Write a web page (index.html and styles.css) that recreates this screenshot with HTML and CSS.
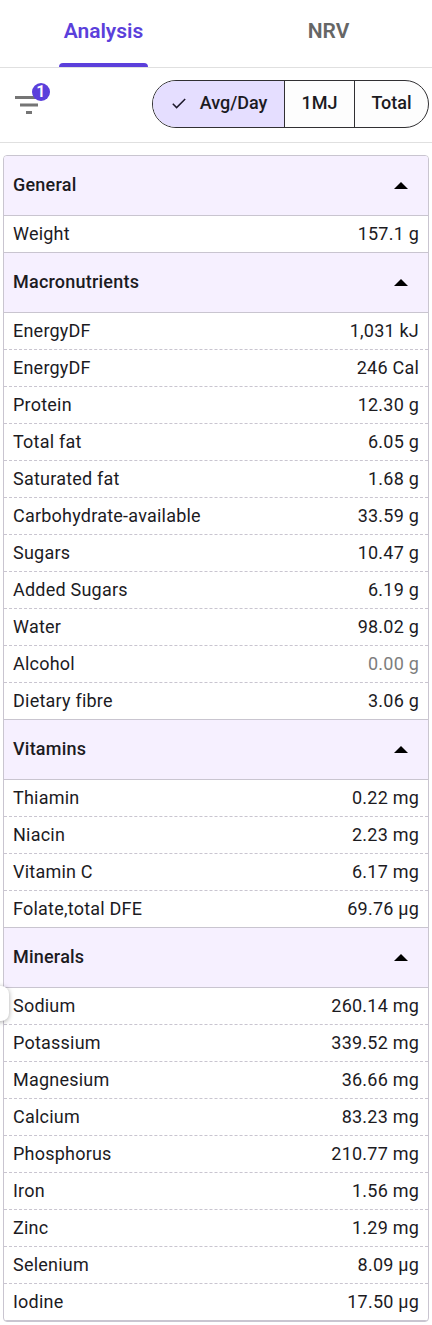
FILE: index.html
```
<!DOCTYPE html>
<html lang="en">

<head>
    <meta charset="UTF-8">
    <meta name="viewport" content="width=device-width, initial-scale=1.0">
    <title>Analysis</title>
    <link rel="stylesheet" href="styles.css">
</head>

<body>
    <div class="tabs">
        <div class="tab active"><span>Analysis</span></div>
        <div class="tab"><span>NRV</span></div>
    </div>

    <div class="toolbar">
        <div class="filter">
            <svg width="24" height="24" viewBox="0 0 24 24">
                <path fill="#757575" d="M0 3h24v3H0zM5 10.5h18v3H5zM11 18h6v3h-6z" />
            </svg>
            <span class="badge">1</span>
        </div>
        <div class="toggle">
            <div class="toggle-item selected">
                <svg width="18" height="18" viewBox="0 0 18 18">
                    <path fill="none" stroke="#1d192b" stroke-width="1.5" d="M2.8 10.8l3.8 3.8 8.6-8.6" />
                </svg>
                Avg/Day
            </div>
            <div class="toggle-item mj">1MJ</div>
            <div class="toggle-item total">Total</div>
        </div>
    </div>

    <div class="nutrients" id="nutrients"></div>
    <div class="drawer-handle"></div>

    <!-- Script -->
    <script>
        const groups = [
            { name: "General", rows: [["Weight", "157.1 g"]] },
            {
                name: "Macronutrients", rows: [
                    ["EnergyDF", "1,031 kJ"],
                    ["EnergyDF", "246 Cal"],
                    ["Protein", "12.30 g"],
                    ["Total fat", "6.05 g"],
                    ["Saturated fat", "1.68 g"],
                    ["Carbohydrate-available", "33.59 g"],
                    ["Sugars", "10.47 g"],
                    ["Added Sugars", "6.19 g"],
                    ["Water", "98.02 g"],
                    ["Alcohol", "0.00 g"],
                    ["Dietary fibre", "3.06 g"]
                ]
            },
            {
                name: "Vitamins", rows: [
                    ["Thiamin", "0.22 mg"],
                    ["Niacin", "2.23 mg"],
                    ["Vitamin C", "6.17 mg"],
                    ["Folate,total DFE", "69.76 µg"]
                ]
            },
            {
                name: "Minerals", rows: [
                    ["Sodium", "260.14 mg"],
                    ["Potassium", "339.52 mg"],
                    ["Magnesium", "36.66 mg"],
                    ["Calcium", "83.23 mg"],
                    ["Phosphorus", "210.77 mg"],
                    ["Iron", "1.56 mg"],
                    ["Zinc", "1.29 mg"],
                    ["Selenium", "8.09 µg"],
                    ["Iodine", "17.50 µg"]
                ]
            }
        ];

        let html = "";
        groups.forEach(function (group) {
            html += '<div class="group-header"><span class="group-name">' + group.name + '</span><span class="arrow"></span></div>';
            html += '<div class="group-rows">';
            group.rows.forEach(function (row) {
                // nothing recorded -> grey value
                const empty = parseFloat(row[1]) === 0 ? " empty" : "";
                html += '<div class="row"><span>' + row[0] + '</span><span class="value' + empty + '">' + row[1] + '</span></div>';
            });
            html += '</div>';
        });
        document.getElementById("nutrients").innerHTML = html;
    </script>
</body>

</html>
```
FILE: styles.css
```
* {
    box-sizing: border-box;
}

body {
    margin: 0;
    position: relative;
    overflow-x: hidden;
    background-color: #fff;
    font-family: Roboto, "Liberation Sans", sans-serif;
    font-size: 18px;
    letter-spacing: 0.22px;
    color: #1c1b1f;
}

.tabs {
    display: flex;
    height: 68px;
    margin: 0 -9px;
    border-bottom: 1px solid #e0e0e0;
}

.tab {
    width: 50%;
    display: flex;
    justify-content: center;
    font-size: 21px;
    font-weight: 600;
    letter-spacing: 0;
    color: #666;
}

.tab span {
    position: relative;
    padding: 0 5px;
    line-height: 62px;
}

.tab.active {
    color: #5b3fdb;
}

.tab.active span::after {
    content: "";
    position: absolute;
    left: 0;
    right: 0;
    bottom: 0;
    height: 4px;
    border-radius: 4px 4px 0 0;
    background-color: #5b3fdb;
}

.toolbar {
    display: flex;
    justify-content: space-between;
    align-items: center;
    height: 75px;
    padding: 0 3px 0 15px;
    border-bottom: 1px solid #e0e0e0;
}

.filter {
    position: relative;
    height: 24px;
}

.filter svg {
    display: block;
}

.badge {
    position: absolute;
    top: -10px;
    left: 17px;
    width: 18px;
    height: 18px;
    border-radius: 50%;
    background-color: #5b3fdb;
    color: #fff;
    font-size: 16px;
    font-weight: 600;
    line-height: 17px;
    text-align: center;
}

.toggle {
    display: flex;
    width: 277px;
    height: 48px;
    margin-bottom: 2px;
    border: 1px solid #313033;
    border-radius: 24px;
    overflow: hidden;
    background-color: #fdfdfd;
    font-weight: 500;
    letter-spacing: 0;
}

.toggle-item {
    display: flex;
    align-items: center;
    justify-content: center;
    flex: 1;
    padding-bottom: 4px;
}

.toggle-item.selected {
    flex: none;
    width: 131px;
    gap: 12px;
    background-color: #e5deff;
}

.toggle-item.mj {
    flex: none;
    width: 71px;
    border-left: 1px solid #313033;
    border-right: 1px solid #313033;
}

.nutrients {
    margin: 12px 3px 0;
    border: 1px solid #c9c5d0;
    border-radius: 4px;
    overflow: hidden;
}

.group-header {
    display: flex;
    justify-content: space-between;
    align-items: center;
    height: 60px;
    padding: 0 20px 0 9px;
    border-bottom: 1px solid #c9c5d0;
    background-color: #f6f0ff;
    font-weight: 500;
}

.group-name {
    padding-bottom: 3px;
}

.arrow {
    border: 7px solid transparent;
    border-top: 0;
    border-bottom: 7px solid #000;
}

.row {
    display: flex;
    justify-content: space-between;
    height: 37px;
    padding: 0 9px;
    line-height: 36px;
    border-bottom: 1px dashed #c9c5d0;
}

.row:last-child {
    border-bottom-style: solid;
}

.value.empty {
    color: #7d7d7d;
}

/* edge of the collapsed side drawer */
.drawer-handle {
    position: absolute;
    top: 986px;
    left: -20px;
    width: 29px;
    height: 35px;
    border-radius: 8px;
    background-color: #fff;
    box-shadow: 0 1px 5px rgba(0, 0, 0, 0.35);
}
```
